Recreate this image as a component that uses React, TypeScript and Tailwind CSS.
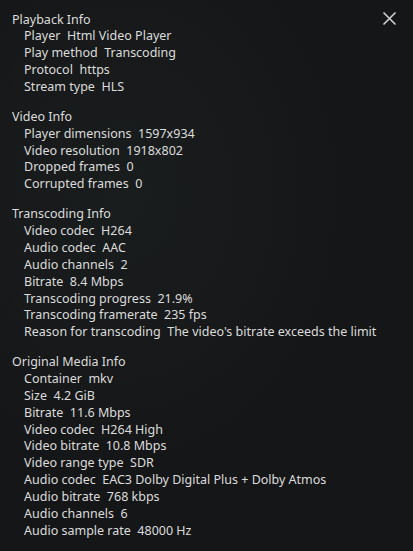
import React from "react";

type Row = [string, string];
type Section = { title: string; rows: Row[] };

const sections: Section[] = [
  {
    title: "Playback Info",
    rows: [
      ["Player", "Html Video Player"],
      ["Play method", "Transcoding"],
      ["Protocol", "https"],
      ["Stream type", "HLS"],
    ],
  },
  {
    title: "Video Info",
    rows: [
      ["Player dimensions", "1597x934"],
      ["Video resolution", "1918x802"],
      ["Dropped frames", "0"],
      ["Corrupted frames", "0"],
    ],
  },
  {
    title: "Transcoding Info",
    rows: [
      ["Video codec", "H264"],
      ["Audio codec", "AAC"],
      ["Audio channels", "2"],
      ["Bitrate", "8.4 Mbps"],
      ["Transcoding progress", "21.9%"],
      ["Transcoding framerate", "235 fps"],
      ["Reason for transcoding", "The video's bitrate exceeds the limit"],
    ],
  },
  {
    title: "Original Media Info",
    rows: [
      ["Container", "mkv"],
      ["Size", "4.2 GiB"],
      ["Bitrate", "11.6 Mbps"],
      ["Video codec", "H264 High"],
      ["Video bitrate", "10.8 Mbps"],
      ["Video range type", "SDR"],
      ["Audio codec", "EAC3 Dolby Digital Plus + Dolby Atmos"],
      ["Audio bitrate", "768 kbps"],
      ["Audio channels", "6"],
      ["Audio sample rate", "48000 Hz"],
    ],
  },
];

export default function App() {
  return (
    <div
      className="relative w-[413px] h-[551px] overflow-hidden bg-[#151618] text-[#dcdcdc] text-[12.5px] leading-[16.83px]"
      style={{ fontFamily: '"Noto Sans", "Open Sans", sans-serif' }}
    >
      <div className="pointer-events-none absolute inset-0 bg-[radial-gradient(ellipse_at_30%_35%,rgba(60,80,70,0.12),transparent_55%)]" />
      <div className="relative flex flex-col gap-[13.3px] pt-[11.5px] pl-[12px]">
        {sections.map((s) => (
          <div key={s.title} className="flex flex-col">
            <div className="whitespace-nowrap">{s.title}</div>
            {s.rows.map(([l, v]) => (
              <div key={l} className="flex whitespace-nowrap pl-[12px]">
                <span className="mr-[6.5px]">{l}</span>
                <span>{v}</span>
              </div>
            ))}
          </div>
        ))}
      </div>
      <button className="absolute left-[382px] top-[11px] w-[15px] h-[15px] flex items-center justify-center">
        <svg width="15" height="15" viewBox="0 0 15 15" fill="none">
          <path d="M1.5 1.5L13.5 13.5M13.5 1.5L1.5 13.5" stroke="#d0d0d0" strokeWidth="1.6" />
        </svg>
      </button>
    </div>
  );
}
